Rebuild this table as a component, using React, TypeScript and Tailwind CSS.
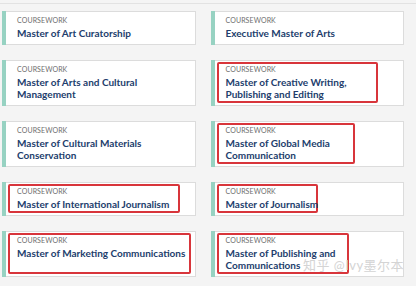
import React from "react";

type Item = { title: string[]; boxed?: boolean; boxW?: string };

const rows: [Item, Item][] = [
  [{ title: ["Master of Art Curatorship"] }, { title: ["Executive Master of Arts"] }],
  [
    { title: ["Master of Arts and Cultural", "Management"] },
    { title: ["Master of Creative Writing,", "Publishing and Editing"], boxed: true, boxW: "w-[161px]" },
  ],
  [
    { title: ["Master of Cultural Materials", "Conservation"] },
    { title: ["Master of Global Media", "Communication"], boxed: true, boxW: "w-[138px]" },
  ],
  [
    { title: ["Master of International Journalism"], boxed: true, boxW: "w-[172px]" },
    { title: ["Master of Journalism"], boxed: true, boxW: "w-[101px]" },
  ],
  [
    { title: ["Master of Marketing Communications"], boxed: true, boxW: "w-[183px]" },
    { title: ["Master of Publishing and", "Communications"], boxed: true, boxW: "w-[132px]" },
  ],
];

function Card({ item }: { item: Item }) {
  return (
    <div className="flex bg-white border border-[#dcdcdc] border-l-0">
      <div className="w-[4px] bg-[#97d2c2] shrink-0 -my-[1px]" />
      <div className="flex-1 pl-[2px] pt-[1px] pb-[2px]">
        <div
          className={
            "h-full border-2 rounded-[2px] pl-[7px] pt-[1px] pb-[1px] " +
            (item.boxed ? "border-[#d8353b] " + item.boxW : "border-transparent")
          }
        >
          <div className="text-[7px] leading-[9px] text-[#6e6e6e] tracking-[0.1px]">COURSEWORK</div>
          <div className="mt-[2px] text-[10px] leading-[12px] font-bold text-[#223d6c] whitespace-nowrap">
            {item.title.map((t, i) => (
              <div key={i}>{t}</div>
            ))}
          </div>
        </div>
      </div>
    </div>
  );
}

export default function App() {
  return (
    <div
      className="relative w-[416px] h-[286px] bg-[#f4f4f4] overflow-hidden"
      style={{ fontFamily: "Lato, 'Noto Sans CJK SC', sans-serif" }}
    >
      <div className="h-[3px]" />
      <div className="border-t border-[#e2e2e2] pt-[7px] pl-[2px] pr-[12px]">
        <div className="grid grid-cols-2 gap-x-[15px] gap-y-[15px]">
          {rows.flatMap((r, i) => [<Card key={i + "a"} item={r[0]} />, <Card key={i + "b"} item={r[1]} />])}
        </div>
      </div>
      <div className="absolute left-[303px] top-[256px] text-[13px] text-[#d4d4d4] tracking-[0.5px] whitespace-nowrap">
        知乎 @Ivy墨尔本
      </div>
    </div>
  );
}
